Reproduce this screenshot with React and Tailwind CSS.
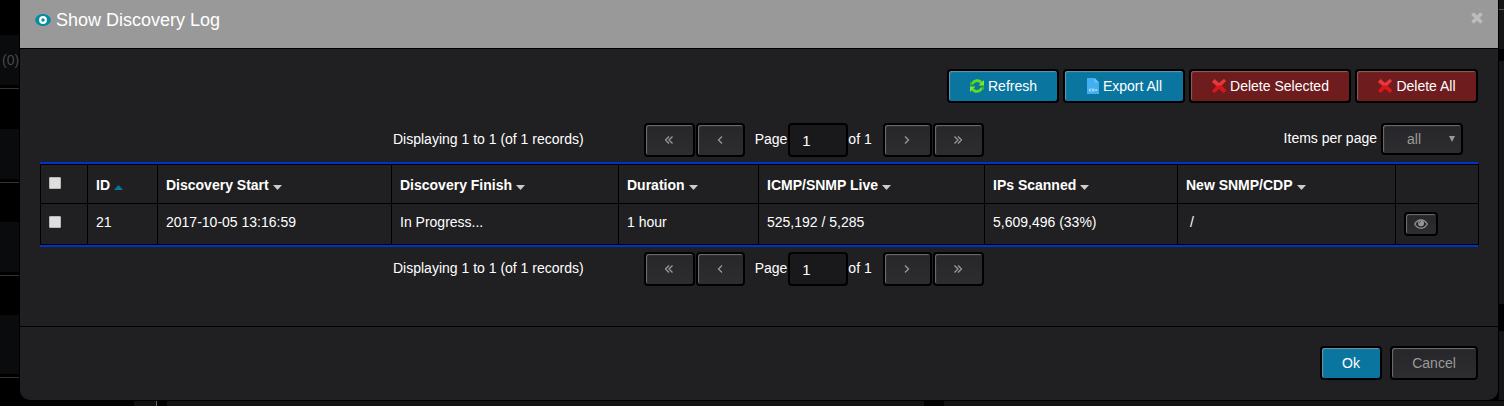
import { useState } from 'react';
import clsx from 'clsx';

const COLUMNS = [
  { key: 'id', label: 'ID', width: 'w-[70px]', sorted: true },
  { key: 'start', label: 'Discovery Start', width: 'w-[234px]' },
  { key: 'finish', label: 'Discovery Finish', width: 'w-[227px]' },
  { key: 'duration', label: 'Duration', width: 'w-[140px]' },
  { key: 'live', label: 'ICMP/SNMP Live', width: 'w-[226px]' },
  { key: 'scanned', label: 'IPs Scanned', width: 'w-[193px]' },
  { key: 'cdp', label: 'New SNMP/CDP', width: 'w-[218px]' },
];

const ROWS = [
  {
    id: '21',
    start: '2017-10-05 13:16:59',
    finish: 'In Progress...',
    duration: '1 hour',
    live: '525,192 / 5,285',
    scanned: '5,609,496 (33%)',
    cdp: '\u00a0/',
  },
];

const BUTTON_VARIANTS = {
  primary: 'bg-[#0a76a0] text-white shadow-[inset_1px_1px_1px_#6a98a8]',
  danger: 'bg-[#6e1c1e] text-white shadow-[inset_1px_1px_1px_#906060]',
  dark: 'bg-linear-to-b from-[#27272b] to-[#2d2d2f] text-[#999] shadow-[inset_1px_1px_1px_#707070]',
};

function Button({ variant = 'dark', className, children, ...props }) {
  return (
    <button
      type="button"
      className={clsx(
        'flex items-center justify-center rounded-[4px] border-2 border-black',
        BUTTON_VARIANTS[variant],
        className
      )}
      {...props}
    >
      {children}
    </button>
  );
}

function ViewIcon() {
  return (
    <svg className="h-3 w-4" viewBox="0 0 16 12" aria-hidden="true">
      <path d="M0 6C.8 2.200 4 0 8 0s7.200 2.200 8 6c-.8 3.800-4 6-8 6S.8 9.800 0 6z" fill="#068ba3" />
      <circle cx="8" cy="6" r="2.800" fill="none" stroke="#fff" strokeWidth="2.200" />
    </svg>
  );
}

function EyeIcon() {
  return (
    <svg className="h-[10px] w-[14px]" viewBox="0 0 14 10" fill="none" stroke="currentColor" aria-hidden="true">
      <path d="M.7 5C2.200 2.300 4.400.8 7 .8S11.800 2.300 13.300 5C11.800 7.700 9.600 9.200 7 9.200S2.200 7.700.7 5z" strokeWidth="1.200" />
      <circle cx="7" cy="4.300" r="3" fill="currentColor" stroke="none" />
      <path d="M5.300 4.300C5.300 3.300 6 2.600 7 2.600" stroke="#29292c" strokeWidth=".7" />
    </svg>
  );
}

function RefreshIcon() {
  return (
    <svg className="h-[14px] w-[14px]" viewBox="0 0 14 14" aria-hidden="true">
      <g fill="none" stroke="#5fdd1c" strokeWidth="2.600">
        <path d="M2.200 5C4 .8 9.500.5 11.500 4" />
        <path d="M11.800 9C10 13.200 4.500 13.500 2.500 10" />
      </g>
      <path d="M14 1v5.500H8.600z" fill="#7bea2c" />
      <path d="M0 13V7.500h5.400z" fill="#7bea2c" />
      <path d="M0 2.500v4h3.500z" fill="#3fb910" />
      <path d="M14 11.500v-4h-3.500z" fill="#3fb910" />
    </svg>
  );
}

function CsvIcon() {
  return (
    <svg className="h-4 w-3" viewBox="0 0 12 16" aria-hidden="true">
      <path d="M0 0h7.500L12 4.500V16H0z" fill="#42b0f0" />
      <path d="M7.500 0L12 4.500H7.500z" fill="#6cc4f7" />
      <path d="M4.500 11H2.500v2h2M7 11H5.500v1H7v1H5.500M8 11l1 2 1-2" fill="none" stroke="#d5efff" strokeWidth=".7" />
    </svg>
  );
}

function DeleteIcon() {
  return (
    <svg className="h-[14px] w-[14px]" viewBox="0 0 14 14" aria-hidden="true">
      <path d="M2.500 0L7 4 12 0l2 2-4 5 4.500 4.500L11.800 14 7 10 2.500 14 0 12l4-5L0 3z" fill="#d4181b" />
      <path d="M2.500 0L7 4 12 0l2 2-5 4.500H4.500L0 3z" fill="#e23a3d" />
    </svg>
  );
}

function Checkbox(props) {
  return (
    <input
      type="checkbox"
      className="block size-3 appearance-none rounded-[1px] border border-[#b8b8b8] bg-[#dedede] checked:bg-[#0a76a0]"
      {...props}
    />
  );
}

function SortArrow({ up }) {
  return (
    <svg className="mt-1 h-[5px] w-[9px]" viewBox="0 0 9 5" aria-hidden="true">
      {up ? <path d="M0 5L4.500 0 9 5z" fill="#0a76a0" /> : <path d="M0 0h9L4.500 5z" fill="#ccc" />}
    </svg>
  );
}

function Chevrons({ left, double }) {
  return (
    <svg
      className={clsx('h-2 w-2', left && 'rotate-180')}
      viewBox="0 0 8 8"
      fill="none"
      stroke="currentColor"
      strokeWidth="1.300"
      aria-hidden="true"
    >
      {double ? <path d="M.5.5L4 4 .5 7.500M4 .5L7.500 4 4 7.500" /> : <path d="M2 .5L5.500 4 2 7.500" />}
    </svg>
  );
}

function Pager({ id, children }) {
  const [page, setPage] = useState('1');

  return (
    <div className="grid grid-cols-[353fr_591fr_494fr]">
      <div className="col-start-2 flex items-center whitespace-nowrap">
        <span className="mr-[60px] pb-[2px]">Displaying 1 to 1 (of 1 records)</span>
        <Button className="mr-px h-[34px] w-[51px]" aria-label="First page">
          <Chevrons left double />
        </Button>
        <Button className="mr-[10px] h-[34px] w-[49px]" aria-label="Previous page">
          <Chevrons left />
        </Button>
        <label htmlFor={id} className="mr-px pb-[2px]">
          Page
        </label>
        <input
          id={id}
          value={page}
          onChange={(e) => setPage(e.target.value)}
          className="h-[34px] w-[60px] rounded-[4px] border-2 border-black bg-[#19191b] px-3 text-[15px]"
        />
        <span className="mr-[11px] pb-[2px]">of 1</span>
        <Button className="mr-px h-[34px] w-[49px]" aria-label="Next page">
          <Chevrons />
        </Button>
        <Button className="h-[34px] w-[51px]" aria-label="Last page">
          <Chevrons double />
        </Button>
      </div>
      {children}
    </div>
  );
}

function ItemsPerPage() {
  return (
    <div className="flex items-start justify-end pr-[15px]">
      <label htmlFor="per-page" className="mr-1 pt-[5px]">
        Items per page
      </label>
      <div className="relative">
        <select
          id="per-page"
          defaultValue="all"
          className="block h-8 w-[82px] appearance-none rounded-[4px] border-2 border-black bg-linear-to-b from-[#27272b] to-[#2d2d2f] pl-6 text-[#999] shadow-[inset_1px_1px_1px_#707070]"
        >
          <option value="all">all</option>
        </select>
        <svg
          className="pointer-events-none absolute top-[13px] right-2 h-[6px] w-[6px]"
          viewBox="0 0 6 6"
          aria-hidden="true"
        >
          <path d="M0 0h6L3 6z" fill="#999" />
        </svg>
      </div>
    </div>
  );
}

function LogTable() {
  return (
    <div className="border-y-2 border-[#0033cc]">
      <table className="w-full table-fixed border-collapse text-left">
        <thead>
          <tr>
            <th className="w-[47px] border border-black px-2 pt-3 pb-2 align-top">
              <Checkbox aria-label="Select all" />
            </th>
            {COLUMNS.map((col) => (
              <th key={col.key} className={clsx('border border-black px-2 pt-[10px] pb-2 align-top', col.width)}>
                <button type="button" className="flex items-center gap-1 font-bold whitespace-nowrap">
                  {col.label}
                  <SortArrow up={col.sorted} />
                </button>
              </th>
            ))}
            <td className="w-[83px] border border-black" />
          </tr>
        </thead>
        <tbody>
          {ROWS.map((row) => (
            <tr key={row.id}>
              <td className="border border-black px-2 pt-3 align-top">
                <Checkbox aria-label={`Select ${row.id}`} />
              </td>
              {COLUMNS.map((col) => (
                <td key={col.key} className="border border-black px-2 pt-2 align-top">
                  {row[col.key]}
                </td>
              ))}
              <td className="border border-black p-2">
                <Button className="h-6 w-[34px]" aria-label="View">
                  <EyeIcon />
                </Button>
              </td>
            </tr>
          ))}
        </tbody>
      </table>
    </div>
  );
}

// Sliver of the sidebar left visible by the dialog
function Sidebar() {
  return (
    <div className="w-5 shrink-0 overflow-hidden bg-black pt-[35px] pr-px text-[#484848]">
      <div className="h-[50px] bg-[#0a0b0d] pt-[15px] pl-[2px]">(0)</div>
      <div className="mt-[3px] mb-10 h-px bg-[#333]" />
      <div className="h-[50px] bg-[#0a0b0d]" />
      <div className="mt-[3px] mb-[39px] h-px bg-[#333]" />
      <div className="h-[50px] bg-[#0a0b0d]" />
      <div className="mt-[3px] mb-[39px] h-px bg-[#333]" />
      <div className="h-[59px] bg-[#0a0b0d]" />
      <div className="mt-[3px] h-px bg-[#333]" />
    </div>
  );
}

export default function App() {
  return (
    <div className="overflow-hidden bg-black font-['Liberation_Sans',Arial,sans-serif] text-[14px] leading-5 text-white">
      <div className="flex">
        <Sidebar />
        <div
          role="dialog"
          aria-labelledby="dialog-title"
          className="min-w-0 flex-1 overflow-hidden rounded-b-[10px] bg-[#202022]"
        >
          <header className="flex items-start justify-between border-b border-black bg-[#999] px-[15px] pt-[10px] pb-[18px]">
            <h1 id="dialog-title" className="flex items-center gap-[5px] text-[18px] leading-5">
              <ViewIcon />
              Show Discovery Log
            </h1>
            <button type="button" aria-label="Close" className="mt-[2px] text-[#bdbdc0]">
              <svg className="size-3" viewBox="0 0 12 12" aria-hidden="true">
                <path d="M1.500 1.500l9 9M10.500 1.500l-9 9" stroke="currentColor" strokeWidth="3.600" />
              </svg>
            </button>
          </header>

          <div className="px-5 pt-5 pb-10">
            <div className="mb-5 flex justify-end gap-1">
              <Button variant="primary" className="h-[34px] w-[112px] gap-1 pl-px">
                <RefreshIcon />
                Refresh
              </Button>
              <Button variant="primary" className="h-[34px] w-[122px] gap-1 pl-px">
                <CsvIcon />
                Export All
              </Button>
              <Button variant="danger" className="h-[34px] w-[162px] gap-1 pl-px">
                <DeleteIcon />
                Delete Selected
              </Button>
              <Button variant="danger" className="h-[34px] w-[123px] gap-1 pl-px">
                <DeleteIcon />
                Delete All
              </Button>
            </div>

            <Pager id="page-top">
              <ItemsPerPage />
            </Pager>
            <div className="my-[5px]">
              <LogTable />
            </div>
            <Pager id="page-bottom" />
          </div>

          <footer className="flex justify-end gap-2 border-t border-black px-5 pt-[19px] pb-5">
            <Button variant="primary" className="h-[34px] w-[62px]">
              Ok
            </Button>
            <Button className="h-[34px] w-[88px]">Cancel</Button>
          </footer>
        </div>
        <div className="w-[6px] shrink-0 border-l border-black bg-[#151515]">
          <div className="h-[10px] border-b border-[#555]" />
          <div className="mt-[39px] h-3 bg-black" />
          <div className="mt-[243px] h-[27px] bg-black" />
        </div>
      </div>
      <div className="flex h-[6px] border-t border-black">
        <div className="w-[134px]" />
        <div className="w-[23px] border-r border-[#666] bg-[#111]" />
        <div className="ml-[10px] flex-1 bg-[#121213]" />
        <div className="w-5" />
        <div className="w-[560px] bg-[#121213]" />
      </div>
    </div>
  );
}
